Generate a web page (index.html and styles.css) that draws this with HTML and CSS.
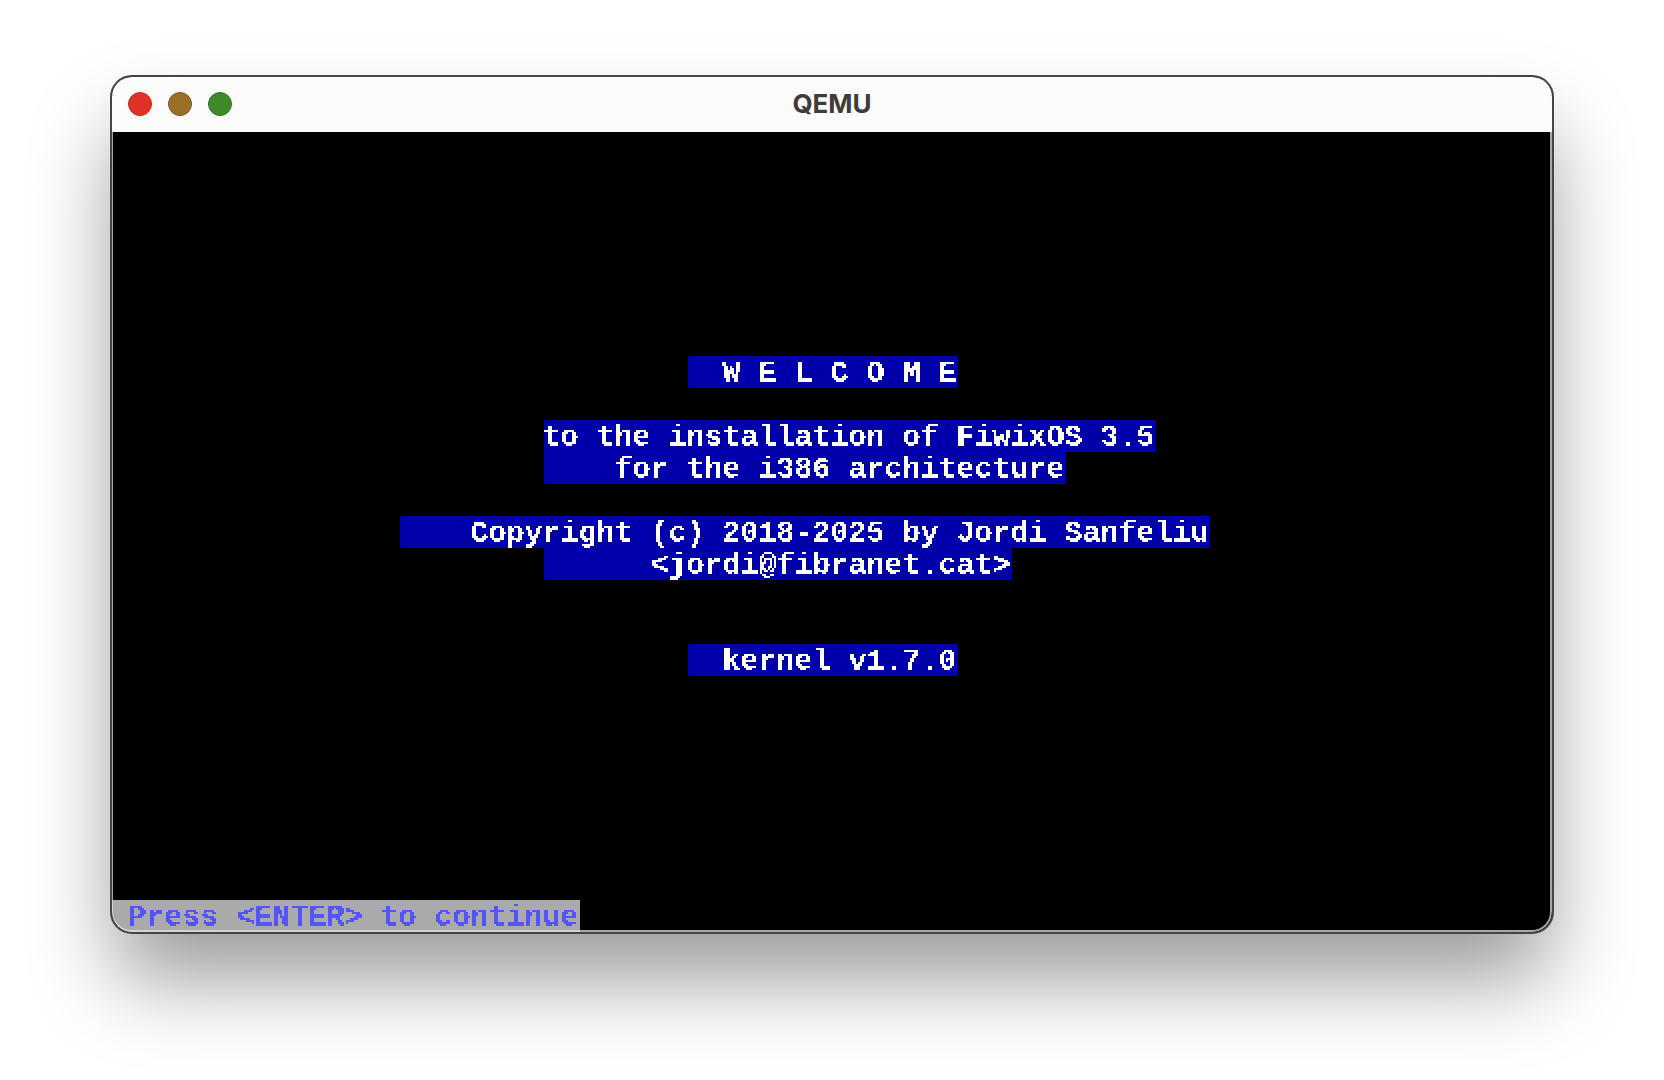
FILE: index.html
```html
<!DOCTYPE html>
<html lang="en">
<head>
<meta charset="utf-8">
<title>QEMU</title>
<link rel="stylesheet" href="styles.css">
</head>
<body>
<svg class="defs" width="0" height="0" aria-hidden="true">
  <filter id="crisp" x="0" y="0" width="100%" height="100%" color-interpolation-filters="sRGB">
    <feFlood x="0" y="0" width="1" height="1" flood-color="#fff"/>
    <feComposite width="2" height="2"/>
    <feTile result="grid"/>
    <feComposite in="SourceGraphic" in2="grid" operator="in"/>
    <feConvolveMatrix order="2" kernelMatrix="1 1 1 1" divisor="1" targetX="1" targetY="1" edgeMode="none" preserveAlpha="false"/>
    <feComponentTransfer>
      <feFuncA type="discrete" tableValues="0 0 1 1"/>
    </feComponentTransfer>
  </filter>
</svg>
<main class="window">
  <header class="titlebar">
    <div class="lights">
      <span class="light red"></span>
      <span class="light amber"></span>
      <span class="light green"></span>
    </div>
    <h1 class="title">QEMU</h1>
  </header>
  <section class="screen">
    <div class="row row-7 col-32"><span class="cells"><span class="glyphs">  W E L C O M E</span></span></div>
    <div class="row row-gap-1 col-24"><span class="cells"><span class="glyphs">to the installation of FiwixOS 3.5</span></span></div>
    <div class="row col-24"><span class="cells"><span class="glyphs">    for the i386 architecture</span></span></div>
    <div class="row row-gap-1 col-16"><span class="cells"><span class="glyphs">    Copyright (c) 2018-2025 by Jordi Sanfeliu</span></span></div>
    <div class="row col-24"><span class="cells"><span class="glyphs">      &lt;jordi@fibranet.cat&gt;</span></span></div>
    <div class="row row-gap-2 col-32"><span class="cells"><span class="glyphs">  kernel v1.7.0</span></span></div>
    <div class="row status"><span class="cells"><span class="glyphs"> Press &lt;ENTER&gt; to continue</span></span></div>
  </section>
</main>
</body>
</html>
```
FILE: styles.css
```css
* { box-sizing: border-box; }
html, body { margin: 0; height: 100%; }
body {
  background: #fff;
  width: 1664px;
  height: 1080px;
  overflow: hidden;
  padding: 75px 110px 0 110px;
}
.defs { position: absolute; }
.window {
  width: 1444px;
  height: 859px;
  border-radius: 22px;
  background: #000;
  border: 2px solid #454545;
  box-shadow: 0 50px 85px -5px rgba(0,0,0,.4);
  display: flex;
  flex-direction: column;
  overflow: hidden;
}
.titlebar {
  height: 55px;
  flex: none;
  background: #fcfcfc;
  position: relative;
  display: flex;
  align-items: center;
  justify-content: center;
  padding-bottom: 2px;
}
.lights {
  position: absolute;
  left: 16px;
  top: 15px;
  display: flex;
  gap: 16px;
}
.light {
  width: 24px;
  height: 24px;
  border-radius: 50%;
  border: 1px solid;
}
.red { background: #e03126; border-color: #c32a20; }
.amber { background: #9a7029; border-color: #7c561d; }
.green { background: #3e8a28; border-color: #2f7420; }
.title {
  margin: 0;
  font: 700 26px/1 Inter, "Liberation Sans", sans-serif;
  color: #3c3c3c;
}
.screen {
  width: 1440px;
  height: 800px;
  flex: none;
  background: #000;
  position: relative;
  display: flex;
  flex-direction: column;
  font: 700 30px/34px "Liberation Mono", monospace;
  color: #fff;
  white-space: pre;
}
.screen::after {
  content: "";
  position: absolute;
  inset: 0;
  border: solid rgba(225,225,225,.75);
  border-width: 0 2px 2px 1px;
  border-radius: 0 0 20px 20px;
  pointer-events: none;
}
.row { height: 32px; flex: none; display: flex; }
.row-7 { margin-top: 224px; }
.row-gap-1 { margin-top: 32px; }
.row-gap-2 { margin-top: 64px; }
.col-16 { padding-left: 288px; }
.col-24 { padding-left: 432px; }
.col-32 { padding-left: 576px; }
.cells { background: #0000aa; display: block; height: 32px; }
.glyphs { display: block; height: 32px; margin: 0 2px 0 -2px; filter: url(#crisp); }
.status { margin-top: auto; }
.status .cells { background: #aaaaaa; color: #5555ff; }
```
